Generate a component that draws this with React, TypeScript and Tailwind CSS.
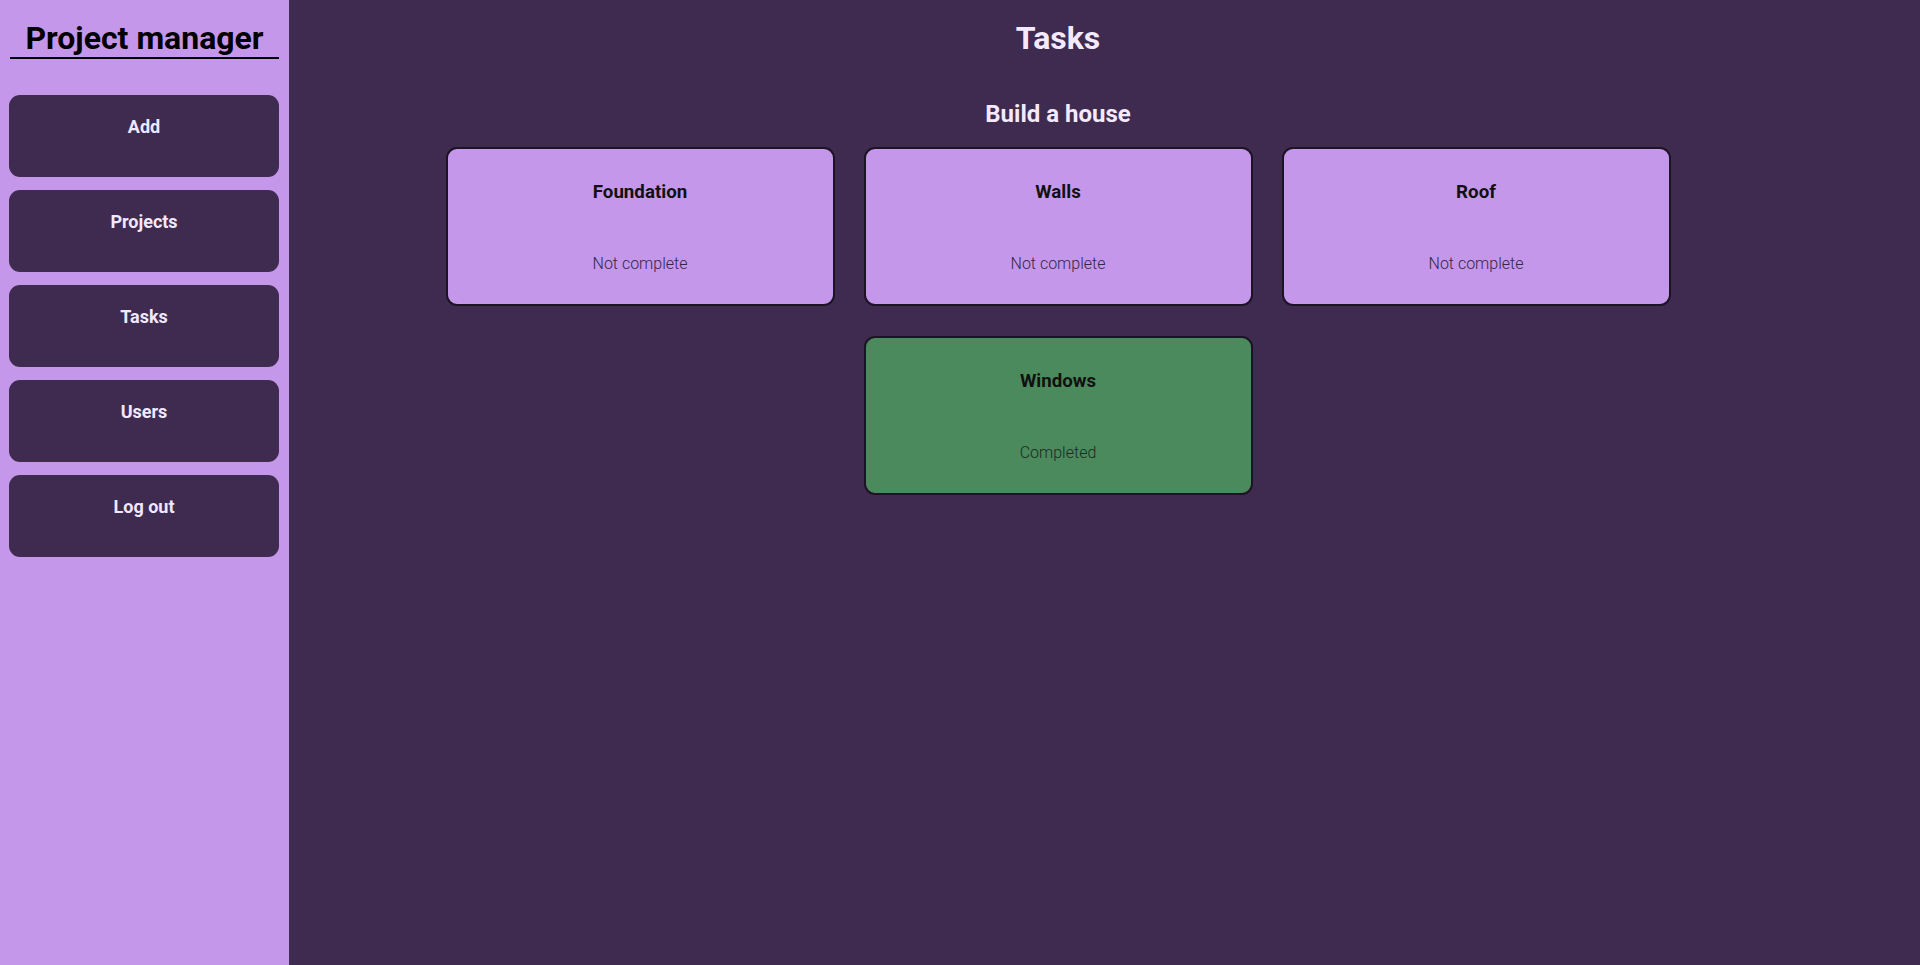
import React from "react";

type Task = {
  id: number;
  name: string;
  completed: boolean;
};

const tasks: Task[] = [
  { id: 1, name: "Foundation", completed: false },
  { id: 2, name: "Walls", completed: false },
  { id: 3, name: "Roof", completed: false },
  { id: 4, name: "Windows", completed: true },
];

const navItems = ["Add", "Projects", "Tasks", "Users", "Log out"];

function Sidebar() {
  return (
    <aside className="w-[289px] shrink-0 bg-[#c597eb] min-h-[965px]">
      <h1 className="mx-[10px] mt-[20px] pb-0 border-b-2 border-black text-center text-[32px] leading-[37px] font-bold text-black">
        Project manager
      </h1>
      <nav className="mt-[36px] ml-[9px] w-[270px] flex flex-col gap-[13px]">
        {navItems.map((item) => (
          <button
            key={item}
            className="h-[82px] rounded-[11px] bg-[#3f2b4f] pt-[21px] text-[18px] leading-[21px] font-bold text-[#f1e8ff] flex justify-center items-start"
          >
            {item}
          </button>
        ))}
      </nav>
    </aside>
  );
}

function TaskCard({ task }: { task: Task }) {
  return (
    <div
      className={
        task.completed
          ? "w-[389px] h-[159px] rounded-[11px] border-2 border-[#1c1324] bg-[#4a8a5c] flex flex-col items-center"
          : "w-[389px] h-[159px] rounded-[11px] border-2 border-[#1c1324] bg-[#c597eb] flex flex-col items-center"
      }
    >
      <h3 className="mt-[32px] text-[18.72px] leading-[22px] font-bold text-[#111]">
        {task.name}
      </h3>
      <p
        className={
          task.completed
            ? "mt-[51px] text-[16px] leading-[19px] font-light text-[#1d2a20]"
            : "mt-[51px] text-[16px] leading-[19px] font-light text-[#33264a]"
        }
      >
        {task.completed ? "Completed" : "Not complete"}
      </p>
    </div>
  );
}

export default function App() {
  return (
    <div className="flex min-h-[965px] bg-[#3f2b4f] font-['Roboto',sans-serif]">
      <Sidebar />
      <main className="flex-1 pr-[93px] text-[#f3eaff]">
        <h1 className="mt-[20px] text-center text-[32px] leading-[37px] font-bold">
          Tasks
        </h1>
        <section className="mt-[43px]">
          <h2 className="text-center text-[24px] leading-[28px] font-bold">
            Build a house
          </h2>
          <div className="mt-[19px] mx-auto w-[1225px] flex flex-wrap justify-center gap-x-[29px] gap-y-[30px]">
            {tasks.map((task) => (
              <TaskCard key={task.id} task={task} />
            ))}
          </div>
        </section>
      </main>
    </div>
  );
}
